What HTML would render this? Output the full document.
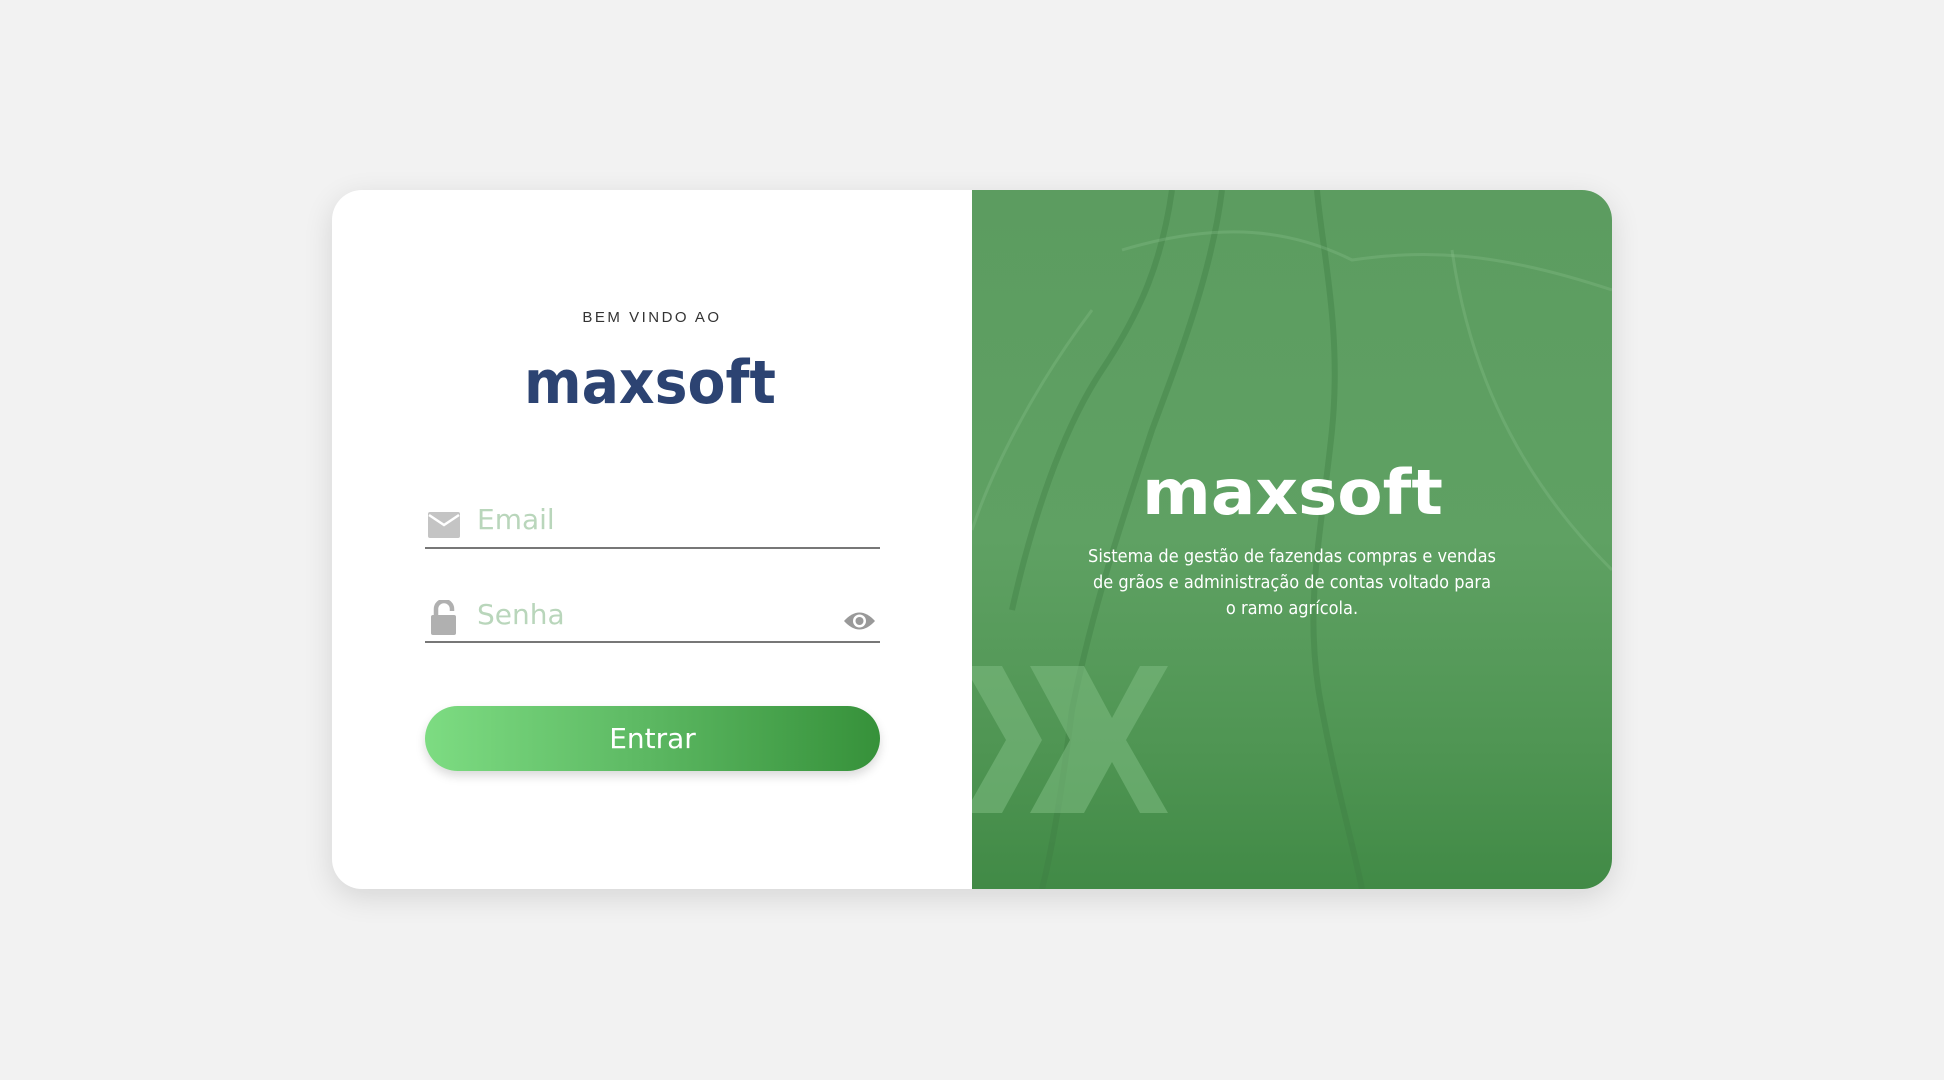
<!DOCTYPE html>
<html><head><meta charset="utf-8"><style>
*{margin:0;padding:0;box-sizing:border-box}
body{width:1944px;height:1080px;background:#f2f2f2;position:relative;overflow:hidden;font-family:"Liberation Sans","DejaVu Sans",sans-serif}
.card{position:absolute;left:332px;top:190px;width:1280px;height:699px;border-radius:30px;background:#fff;box-shadow:0 8px 30px rgba(0,0,0,0.12);overflow:hidden}
.right{position:absolute;left:640px;top:0;width:640px;height:699px;background:linear-gradient(180deg,#5c9c60 0%,#5fa163 50%,#4f9553 80%,#418a46 100%);overflow:hidden}
.abs{position:absolute}
.welcome{left:0;width:640px;top:119px;text-align:center;font-size:15px;letter-spacing:2.5px;color:#333}
.line{position:absolute;left:93px;width:455px;height:1.5px;background:#777}
.ph{position:absolute;left:145px;font-size:28px;color:#b9d6bb;font-family:"DejaVu Sans","Liberation Sans",sans-serif}
.btn{position:absolute;left:93px;top:516px;width:455px;height:65px;border-radius:33px;background:linear-gradient(90deg,#7ddc82,#5fbb65 45%,#36913a);box-shadow:0 5px 10px rgba(0,0,0,0.15);color:#fff;font-size:28px;text-align:center;line-height:65px;font-family:"DejaVu Sans",sans-serif}
.desc{left:0;width:640px;top:354px;text-align:center;color:#fff;font-size:18px;line-height:26px;font-family:"DejaVu Sans Condensed","DejaVu Sans",sans-serif}
</style></head><body>
<div class="card">
  <div class="abs welcome">BEM VINDO AO</div>
  <svg class="abs" style="left:190px;top:160px" width="260" height="60" viewBox="0 0 260 60">
    <text x="2" y="53" textLength="252" lengthAdjust="spacingAndGlyphs" font-family="DejaVu Sans" font-weight="bold" font-size="60" fill="#2c4372">maxsoft</text>
  </svg>
  <svg class="abs" style="left:96px;top:322px" width="32" height="26" viewBox="0 0 32 26">
    <rect x="0" y="0" width="32" height="26" rx="2" fill="#c4c4c4"/>
    <path d="M1 3 L16 13 L31 3" stroke="#fff" stroke-width="2.5" fill="none"/>
  </svg>
  <div class="ph" style="top:313px">Email</div>
  <div class="line" style="top:357px"></div>
  <svg class="abs" style="left:99px;top:410px" width="26" height="35" viewBox="0 0 26 35">
    <path d="M5 16 V9 a8 8 0 0 1 16 0 v2" stroke="#b0b0b0" stroke-width="4.5" fill="none"/>
    <rect x="0" y="15" width="25" height="20" rx="2" fill="#b0b0b0"/>
  </svg>
  <div class="ph" style="top:408px">Senha</div>
  <svg class="abs" style="left:511px;top:420px" width="33" height="22" viewBox="0 0 33 22">
    <path d="M1 11 Q16.5 -6 32 11 Q16.5 28 1 11Z" fill="#999"/>
    <circle cx="16.5" cy="11" r="6.5" fill="#fff"/>
    <circle cx="16.5" cy="11" r="4" fill="#999"/>
  </svg>
  <div class="line" style="top:451px"></div>
  <div class="btn">Entrar</div>

  <div class="right">
    <svg class="abs" style="left:0;top:0" width="640" height="699" viewBox="0 0 640 699">
      <g fill="none" stroke="#3e7e43" stroke-opacity="0.4" stroke-width="6">
        <path d="M250 0 C240 80 210 160 180 240 C150 330 120 420 100 520 C90 600 80 660 70 699"/>
        <path d="M345 0 C350 60 370 140 360 240 C350 340 330 420 350 520 C365 600 380 650 390 699"/>
        <path d="M200 0 C190 70 170 120 130 180 C90 240 60 330 40 420"/>
      </g>
      <g fill="none" stroke="#8cc490" stroke-opacity="0.3" stroke-width="3">
        <path d="M150 60 C250 30 320 40 380 70 C450 60 520 60 640 100"/>
        <path d="M480 60 C500 200 560 300 640 380"/>
        <path d="M120 120 C60 200 20 280 0 340"/>
      </g>
      <g fill="#7dbc81" fill-opacity="0.55">
        <path d="M0 476 L30 476 L70 550 L30 623 L0 623 L0 610 L34 550 L0 490Z"/>
        <path d="M58 476 L112 476 L140 528 L168 476 L196 476 L154 550 L196 623 L168 623 L140 572 L112 623 L58 623 L98 550Z"/>
      </g>
    </svg>
    <svg class="abs" style="left:168px;top:272px" width="306" height="60" viewBox="0 0 306 60">
      <text x="2" y="52" textLength="301" lengthAdjust="spacingAndGlyphs" font-family="DejaVu Sans" font-weight="bold" font-size="62" fill="#fff">maxsoft</text>
    </svg>
    <div class="abs desc">Sistema de gestão de fazendas compras e vendas<br>de grãos e administração de contas voltado para<br>o ramo agrícola.</div>
  </div>
</div>
</body></html>
